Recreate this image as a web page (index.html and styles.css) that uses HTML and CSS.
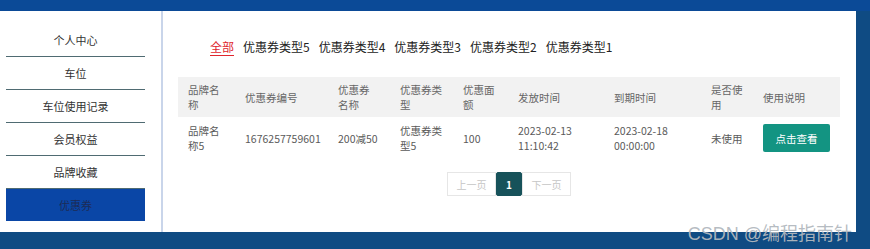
FILE: index.html
```html
<!DOCTYPE html>
<html>
  <head>
    <meta charset="UTF-8" />
    <title>优惠券</title>
    <link rel="stylesheet" href="styles.css">
  </head>
  <body>
    <div class="screen">
      <div class="topbar"></div>
      <div class="panel">
        <!-- 左侧菜单 -->
        <ul class="menu">
          <li>个人中心</li>
          <li>车位</li>
          <li>车位使用记录</li>
          <li>会员权益</li>
          <li>品牌收藏</li>
          <li class="active">优惠券</li>
        </ul>
        <div class="divider"></div>

        <div class="main">
          <div class="tabs">
            <span class="tab on">全部</span>
            <span class="tab">优惠券类型5</span>
            <span class="tab">优惠券类型4</span>
            <span class="tab">优惠券类型3</span>
            <span class="tab">优惠券类型2</span>
            <span class="tab">优惠券类型1</span>
          </div>

          <table class="list">
            <colgroup>
              <col style="width: 57px" />
              <col style="width: 93px" />
              <col style="width: 62px" />
              <col style="width: 63px" />
              <col style="width: 55px" />
              <col style="width: 96px" />
              <col style="width: 97px" />
              <col style="width: 52px" />
              <col style="width: 87px" />
            </colgroup>
            <thead>
              <tr>
                <th>品牌名称</th>
                <th>优惠券编号</th>
                <th class="c-name">优惠券名称</th>
                <th class="c-type">优惠券类型</th>
                <th>优惠面额</th>
                <th>发放时间</th>
                <th>到期时间</th>
                <th class="c-used">是否使用</th>
                <th>使用说明</th>
              </tr>
            </thead>
            <tbody>
              <tr>
                <td>品牌名称5</td>
                <td>1676257759601</td>
                <td class="c-name">200减50</td>
                <td class="c-type">优惠券类型5</td>
                <td>100</td>
                <td>2023-02-13 11:10:42</td>
                <td>2023-02-18 00:00:00</td>
                <td class="c-used">未使用</td>
                <td><button class="view-btn">点击查看</button></td>
              </tr>
            </tbody>
          </table>

          <div class="pager">
            <a class="page-btn wide">上一页</a>
            <a class="page-btn current">1</a>
            <a class="page-btn wide">下一页</a>
          </div>
        </div>
      </div>
      <div class="watermark">CSDN @编程指南针</div>
    </div>
  </body>
</html>
```

FILE: styles.css
```css
body {
  margin: 0;
  font-family: "Noto Sans CJK SC", "Noto Sans", sans-serif;
  color: #333;
}

.screen {
  position: relative;
  width: 870px;
  height: 249px;
  box-sizing: border-box;
  background: #0f4b83;
  padding: 0 14px 17px 0;
}

.topbar {
  height: 11px;
  margin-right: -14px;
  background: #0b4a97;
}

.panel {
  display: flex;
  height: 221px;
  background: #fff;
}

/* 左侧菜单 */
.menu {
  list-style: none;
  margin: 13px 16px 0 6px;
  padding: 0;
  width: 139px;
}

.menu li {
  height: 32px;
  line-height: 32px;
  text-align: center;
  font-size: 11px;
  border-bottom: 1px solid #4f6b72;
}

.menu li.active {
  background: #0a46a6;
  color: #1d2b55;
  border-bottom: none;
}

.divider {
  width: 2px;
  background: #c9d5ea;
}

.main {
  flex: 1;
  padding: 28px 16px 0 15px;
}

.tabs {
  display: flex;
  gap: 9px;
  padding-left: 32px;
  font-size: 12px;
  line-height: 16px;
  color: #222;
}

.tab.on {
  color: #e0262d;
  border-bottom: 1px solid #e0262d;
}

.list {
  width: 662px;
  margin-top: 21px;
  table-layout: fixed;
  border-collapse: collapse;
  font-size: 10.5px;
  line-height: 15px;
  color: #666;
}

.list th {
  height: 40px;
  background: #f2f2f2;
  font-weight: normal;
  text-align: left;
  padding: 0 10px;
}

.list td {
  height: 42px;
  padding: 0 10px;
  color: #5a5a5a;
}

.list .c-name {
  padding-right: 12px;
}

.list .c-type {
  padding-right: 5px;
}

.list .c-used {
  padding-right: 8px;
}

.view-btn {
  width: 67px;
  height: 28px;
  border: none;
  border-radius: 2px;
  background: #139482;
  color: #fff;
  font-family: inherit;
  font-size: 10.5px;
  padding: 0;
}

.pager {
  display: flex;
  justify-content: center;
  margin-top: 13px;
}

.page-btn {
  height: 24px;
  line-height: 24px;
  box-sizing: border-box;
  border: 1px solid #e6e6e6;
  font-size: 10px;
  color: #c6c6c6;
  text-align: center;
}

.page-btn.wide {
  width: 49px;
}

.page-btn.current {
  width: 26px;
  background: #17525a;
  border-color: #17525a;
  border-radius: 2px;
  color: #fff;
  font-weight: bold;
}

.watermark {
  position: absolute;
  right: 18px;
  bottom: 4px;
  font-family: "Liberation Sans", "Noto Sans CJK SC", sans-serif;
  font-size: 18px;
  color: rgba(178, 184, 190, 0.95);
}
```
